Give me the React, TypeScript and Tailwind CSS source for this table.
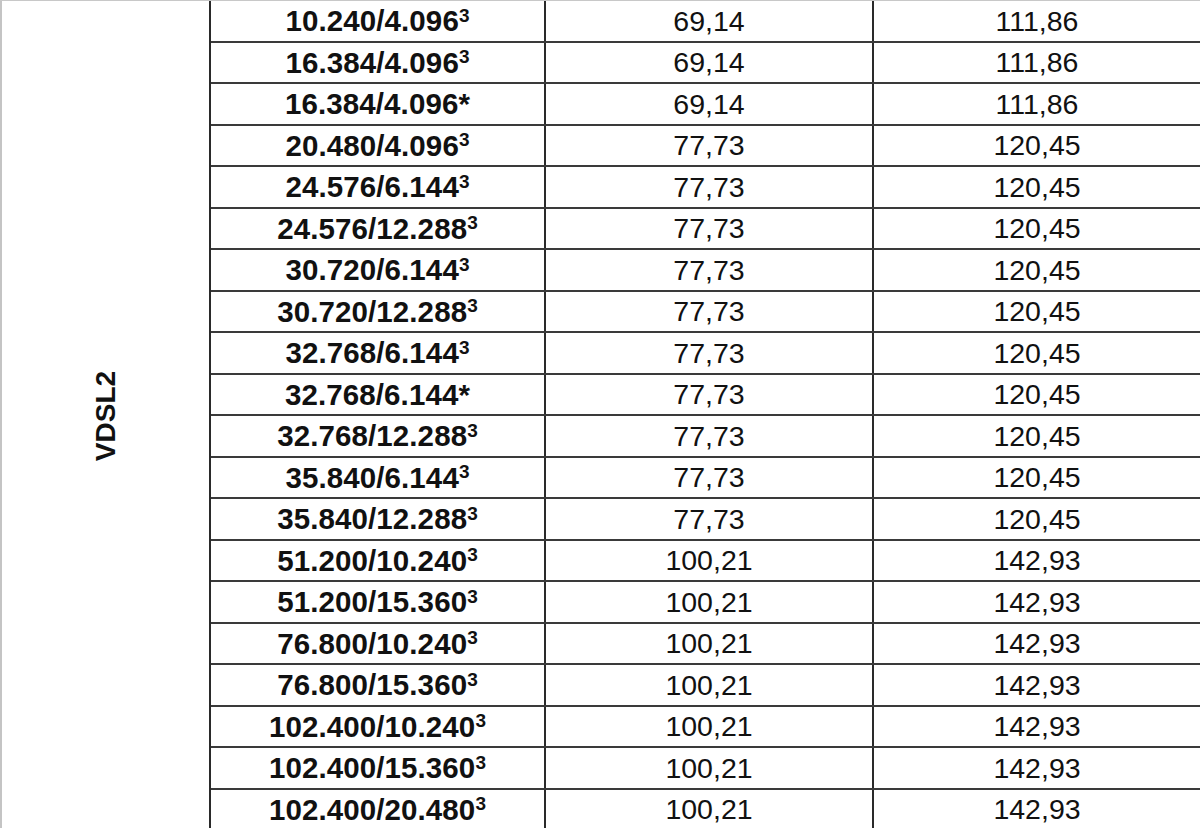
import React from 'react';

type Row = { rate: string; sup: string; a: string; b: string };

const mk = (rate: string, sup: string, a: string, b: string): Row => ({ rate, sup, a, b });

const rows: Row[] = [
  mk('10.240/4.096', '3', '69,14', '111,86'),
  mk('16.384/4.096', '3', '69,14', '111,86'),
  mk('16.384/4.096*', '', '69,14', '111,86'),
  mk('20.480/4.096', '3', '77,73', '120,45'),
  mk('24.576/6.144', '3', '77,73', '120,45'),
  mk('24.576/12.288', '3', '77,73', '120,45'),
  mk('30.720/6.144', '3', '77,73', '120,45'),
  mk('30.720/12.288', '3', '77,73', '120,45'),
  mk('32.768/6.144', '3', '77,73', '120,45'),
  mk('32.768/6.144*', '', '77,73', '120,45'),
  mk('32.768/12.288', '3', '77,73', '120,45'),
  mk('35.840/6.144', '3', '77,73', '120,45'),
  mk('35.840/12.288', '3', '77,73', '120,45'),
  mk('51.200/10.240', '3', '100,21', '142,93'),
  mk('51.200/15.360', '3', '100,21', '142,93'),
  mk('76.800/10.240', '3', '100,21', '142,93'),
  mk('76.800/15.360', '3', '100,21', '142,93'),
  mk('102.400/10.240', '3', '100,21', '142,93'),
  mk('102.400/15.360', '3', '100,21', '142,93'),
  mk('102.400/20.480', '3', '100,21', '142,93'),
];

const App: React.FC = () => {
  return (
    <div
      className="w-[1200px] h-[828px] overflow-hidden bg-white text-[#111]"
      style={{ fontFamily: '"Liberation Sans", Arial, sans-serif' }}
    >
      <div className="flex border-t border-[#c8c8c8]">
        {/* product column */}
        <div className="w-[211px] shrink-0 border-l-2 border-l-[#c4c4c4] border-r-2 border-r-[#2a2a2a] flex items-center justify-center">
          <span className="inline-block -rotate-90 font-bold text-[28px] leading-none translate-x-[1px]">VDSL2</span>
        </div>

        <div className="flex-1 flex flex-col">
          {rows.map((r, i) => (
            <div key={i} className="h-[41.5px] shrink-0 flex border-b-2 border-[#3a3a3a]">
              <div className="w-[335px] shrink-0 border-r-2 border-[#2a2a2a] flex items-center justify-center">
                <span className="font-bold text-[29.5px] leading-none tracking-[0.1px]">
                  {r.rate}
                  {r.sup && <sup className="text-[19px] top-[-0.5em]">{r.sup}</sup>}
                </span>
              </div>
              <div className="w-[328px] shrink-0 border-r-2 border-[#2a2a2a] flex items-center justify-center">
                <span className="text-[28.5px] leading-none">{r.a}</span>
              </div>
              <div className="flex-1 flex items-center justify-center">
                <span className="text-[28.5px] leading-none">{r.b}</span>
              </div>
            </div>
          ))}
        </div>
      </div>
    </div>
  );
};

export default App;
